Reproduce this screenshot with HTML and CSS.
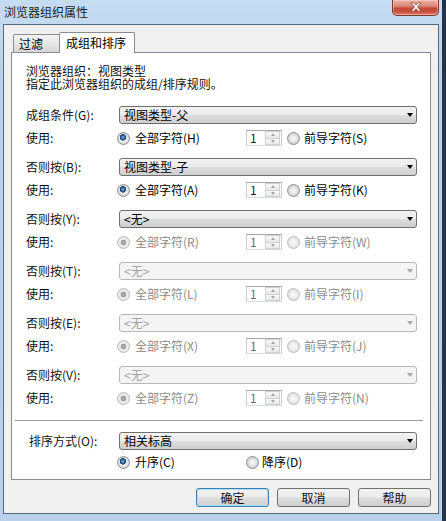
FILE: index.html
```html
<!DOCTYPE html>
<html lang="zh-CN">
<head>
<meta charset="utf-8">
<title>浏览器组织属性</title>
<link rel="stylesheet" href="styles.css">
</head>
<body>
<div class="window">
  <div class="titlebar">
    <span class="title">浏览器组织属性</span>
    <div class="close">
      <svg width="12" height="10" viewBox="0 0 12 10"><path d="M0.8 0.8h3.1l2.1 2.4 2.1-2.4h3.1L7.6 5l3.6 4.2H8.1L6 6.8 3.9 9.2H0.8L4.4 5z" fill="#fff" stroke="#7a2f25" stroke-width="0.7"/></svg>
    </div>
  </div>
  <div class="client">
    <div class="tabs">
      <div class="tab">过滤</div>
      <div class="tab active">成组和排序</div>
    </div>
    <div class="panel">
      <div class="desc">浏览器组织：视图类型<br>指定此浏览器组织的成组/排序规则。</div>

      <div class="groups">
        <div class="group">
          <div class="row"><span class="lbl">成组条件(G):</span><div class="select"><span class="val">视图类型-父</span><i class="arrow"></i></div></div>
          <div class="row"><span class="lbl">使用:</span>
            <div class="opts">
              <div class="opt1"><i class="radio on"></i><span>全部字符(H)</span></div>
              <div class="spin"><span class="num">1</span><div class="btns"><b class="up"><i></i></b><b class="down"><i></i></b></div></div>
              <div class="opt2"><i class="radio"></i><span>前导字符(S)</span></div>
            </div>
          </div>
        </div>

        <div class="group">
          <div class="row"><span class="lbl">否则按(B):</span><div class="select"><span class="val">视图类型-子</span><i class="arrow"></i></div></div>
          <div class="row"><span class="lbl">使用:</span>
            <div class="opts">
              <div class="opt1"><i class="radio on"></i><span>全部字符(A)</span></div>
              <div class="spin"><span class="num">1</span><div class="btns"><b class="up"><i></i></b><b class="down"><i></i></b></div></div>
              <div class="opt2"><i class="radio"></i><span>前导字符(K)</span></div>
            </div>
          </div>
        </div>

        <div class="group">
          <div class="row"><span class="lbl">否则按(Y):</span><div class="select"><span class="val">&lt;无&gt;</span><i class="arrow"></i></div></div>
          <div class="row"><span class="lbl">使用:</span>
            <div class="opts dis">
              <div class="opt1"><i class="radio on"></i><span>全部字符(R)</span></div>
              <div class="spin"><span class="num">1</span><div class="btns"><b class="up"><i></i></b><b class="down"><i></i></b></div></div>
              <div class="opt2"><i class="radio"></i><span>前导字符(W)</span></div>
            </div>
          </div>
        </div>

        <div class="group">
          <div class="row"><span class="lbl">否则按(T):</span><div class="select dis"><span class="val">&lt;无&gt;</span><i class="arrow"></i></div></div>
          <div class="row"><span class="lbl">使用:</span>
            <div class="opts dis">
              <div class="opt1"><i class="radio on"></i><span>全部字符(L)</span></div>
              <div class="spin"><span class="num">1</span><div class="btns"><b class="up"><i></i></b><b class="down"><i></i></b></div></div>
              <div class="opt2"><i class="radio"></i><span>前导字符(I)</span></div>
            </div>
          </div>
        </div>

        <div class="group">
          <div class="row"><span class="lbl">否则按(E):</span><div class="select dis"><span class="val">&lt;无&gt;</span><i class="arrow"></i></div></div>
          <div class="row"><span class="lbl">使用:</span>
            <div class="opts dis">
              <div class="opt1"><i class="radio on"></i><span>全部字符(X)</span></div>
              <div class="spin"><span class="num">1</span><div class="btns"><b class="up"><i></i></b><b class="down"><i></i></b></div></div>
              <div class="opt2"><i class="radio"></i><span>前导字符(J)</span></div>
            </div>
          </div>
        </div>

        <div class="group">
          <div class="row"><span class="lbl">否则按(V):</span><div class="select dis"><span class="val">&lt;无&gt;</span><i class="arrow"></i></div></div>
          <div class="row"><span class="lbl">使用:</span>
            <div class="opts dis">
              <div class="opt1"><i class="radio on"></i><span>全部字符(Z)</span></div>
              <div class="spin"><span class="num">1</span><div class="btns"><b class="up"><i></i></b><b class="down"><i></i></b></div></div>
              <div class="opt2"><i class="radio"></i><span>前导字符(N)</span></div>
            </div>
          </div>
        </div>
      </div>

      <div class="sep"></div>

      <div class="row sort"><span class="lbl">排序方式(O):</span><div class="select"><span class="val">相关标高</span><i class="arrow"></i></div></div>
      <div class="row sort-opts">
        <span class="lbl"></span>
        <div class="opts">
          <div class="opt1"><i class="radio on"></i><span>升序(C)</span></div>
          <div class="opt3"><i class="radio"></i><span>降序(D)</span></div>
        </div>
      </div>
    </div>

    <div class="buttons">
      <div class="btn default">确定</div>
      <div class="btn">取消</div>
      <div class="btn">帮助</div>
    </div>
  </div>
</div>
</body>
</html>
```

FILE: styles.css
```css
* { box-sizing: border-box; }
html, body { margin: 0; padding: 0; }
body {
  width: 446px;
  height: 521px;
  overflow: hidden;
  background: linear-gradient(to right, #5d7ea3, #243448);
  font-family: "Noto Sans CJK SC", "Noto Sans", sans-serif;
  font-size: 12px;
  color: #000;
}
.window {
  width: 442px;
  height: 521px;
  display: flex;
  flex-direction: column;
  background: linear-gradient(#c6dcf2, #b9d1ea 80px, #b8d0ea);
}
.titlebar {
  height: 24px;
  flex: none;
  display: flex;
  justify-content: space-between;
  align-items: flex-start;
  padding: 0 3px 0 4px;
}
.title {
  line-height: 24px;
  color: #1b1b1b;
}
.close {
  width: 47px;
  height: 16px;
  border: 1px solid #7b3a30;
  border-top: none;
  border-radius: 0 0 5px 5px;
  background: linear-gradient(#eab3a6 0%, #dc8a78 40%, #c5493a 55%, #c94c3b 75%, #e0806a 100%);
  box-shadow: inset 0 0 0 1px rgba(255, 220, 210, 0.45);
  display: flex;
  align-items: center;
  justify-content: center;
}
.close svg { display: block; margin-top: -1px; }

.client {
  margin: 0 3px;
  border: 1px solid #56687c;
  background: #f0f0f0;
  padding: 0 7px 6px 7px;
}
.tabs {
  display: flex;
  align-items: flex-end;
  padding: 7px 0 0 2px;
}
.tab {
  width: 47px;
  height: 18px;
  border: 1px solid #898c95;
  border-bottom: none;
  border-radius: 2px 2px 0 0;
  background: linear-gradient(#f4f4f4, #e6e6e6 50%, #d7d7d7);
  padding-left: 5px;
  line-height: 17px;
  white-space: nowrap;
}
.tab.active {
  width: 76px;
  height: 21px;
  margin-left: -1px;
  margin-bottom: -1px;
  padding: 2px 0 0 6px;
  line-height: 15px;
  background: #fff;
  position: relative;
  z-index: 1;
}
.panel {
  border: 1px solid #898c95;
  background: #fff;
  padding: 11px 13px 8px 14px;
}
.desc { line-height: 13px; color: #111; }
.groups {
  margin-top: 16px;
  display: flex;
  flex-direction: column;
  gap: 11px;
}
.group {
  display: flex;
  flex-direction: column;
  gap: 5px;
}
.row {
  display: flex;
  align-items: center;
  height: 18px;
  line-height: 16px;
  white-space: nowrap;
}
.lbl { width: 93px; flex: none; color: #111; }

.select {
  width: 298px;
  height: 18px;
  border: 1px solid #707070;
  border-radius: 3px;
  background: linear-gradient(#f3f3f3 0%, #ebebeb 48%, #dddddd 52%, #cfcfcf 100%);
  display: flex;
  align-items: center;
  justify-content: space-between;
  padding: 0 3px 0 4px;
}
.select .val { line-height: 16px; }
.select .arrow {
  width: 0; height: 0;
  border-left: 3.5px solid transparent;
  border-right: 3.5px solid transparent;
  border-top: 4px solid #000;
}
.select.dis {
  border-color: #b5b9bc;
  background: #f4f4f4;
}
.select.dis .val { color: #a3a3a3; }
.select.dis .arrow { border-top-color: #a8a8a8; }

.opts {
  display: flex;
  align-items: center;
  margin-left: -2px;
}
.opt1 {
  width: 129px;
  display: flex;
  align-items: center;
  gap: 5px;
}
.opt2 {
  margin-left: 5px;
  display: flex;
  align-items: center;
  gap: 4px;
}
.opt3 {
  display: flex;
  align-items: center;
  gap: 3px;
}
.radio {
  width: 13px;
  height: 13px;
  flex: none;
  border-radius: 50%;
  border: 1px solid #8f9193;
  background: radial-gradient(circle, #f7f7f7 0, #f0f0f0 2px, #cfd0d1 5.5px);
}
.radio.on {
  background:
    radial-gradient(circle at 45% 40%, #a5cdf2 0, #3a78b8 1.3px, #143660 3px, rgba(20,54,96,0) 3.4px),
    radial-gradient(circle, #f7f7f7 0, #e9eaeb 3.5px, #cfd0d1 5.5px);
}
.opts.dis { color: #8b8b8b; }
.opts.dis .radio {
  border-color: #bcbcbc;
  background: radial-gradient(circle, #fafafa 0, #f4f4f4 2px, #e2e2e2 5.5px);
}
.opts.dis .radio.on {
  background:
    radial-gradient(circle, #b4b4b4 0, #999 2.6px, rgba(153,153,153,0) 3.2px),
    radial-gradient(circle, #fafafa 0, #f0f0f0 3.5px, #e2e2e2 5.5px);
}

.spin {
  width: 36px;
  height: 16px;
  display: flex;
  border: 1px solid #a5a8ae;
  border-color: #a3a6ad #c9ccd2 #d6d9de #c9ccd2;
  background: #fff;
}
.spin .num {
  flex: 1;
  padding-left: 3px;
  line-height: 14px;
  color: #222;
}
.opts.dis .spin .num { color: #6e6e6e; }
.spin .btns {
  width: 15px;
  margin: 0 1px 0 0;
  display: flex;
  flex-direction: column;
}
.spin b {
  flex: 1;
  display: flex;
  align-items: center;
  justify-content: center;
  border: 1px solid #cfd1d4;
  background: linear-gradient(#f7f7f7, #e9e9e9);
}
.spin b + b { margin-top: -1px; }
.spin .up i {
  width: 0; height: 0;
  border-left: 2.5px solid transparent;
  border-right: 2.5px solid transparent;
  border-bottom: 3px solid #a8a8a8;
}
.spin .down i {
  width: 0; height: 0;
  border-left: 2.5px solid transparent;
  border-right: 2.5px solid transparent;
  border-top: 3px solid #a8a8a8;
}

.sep {
  height: 1px;
  margin: 13px -6px 0 -11px;
  background: #a0a0a0;
}
.sort { margin-top: 11px; }
.sort .lbl { padding-left: 3px; }
.sort-opts { margin-top: 3px; }

.buttons {
  margin-top: 8px;
  display: flex;
  justify-content: flex-end;
  gap: 8px;
}
.btn {
  width: 73px;
  height: 19px;
  border: 1px solid #707070;
  border-radius: 3px;
  background: linear-gradient(#f3f3f3 0%, #ebebeb 48%, #dddddd 52%, #cfcfcf 100%);
  text-align: center;
  line-height: 17px;
  color: #111;
}
.btn.default {
  border-color: #3c7fb1;
  box-shadow: inset 0 0 0 1px #a8e4fb;
}
```
